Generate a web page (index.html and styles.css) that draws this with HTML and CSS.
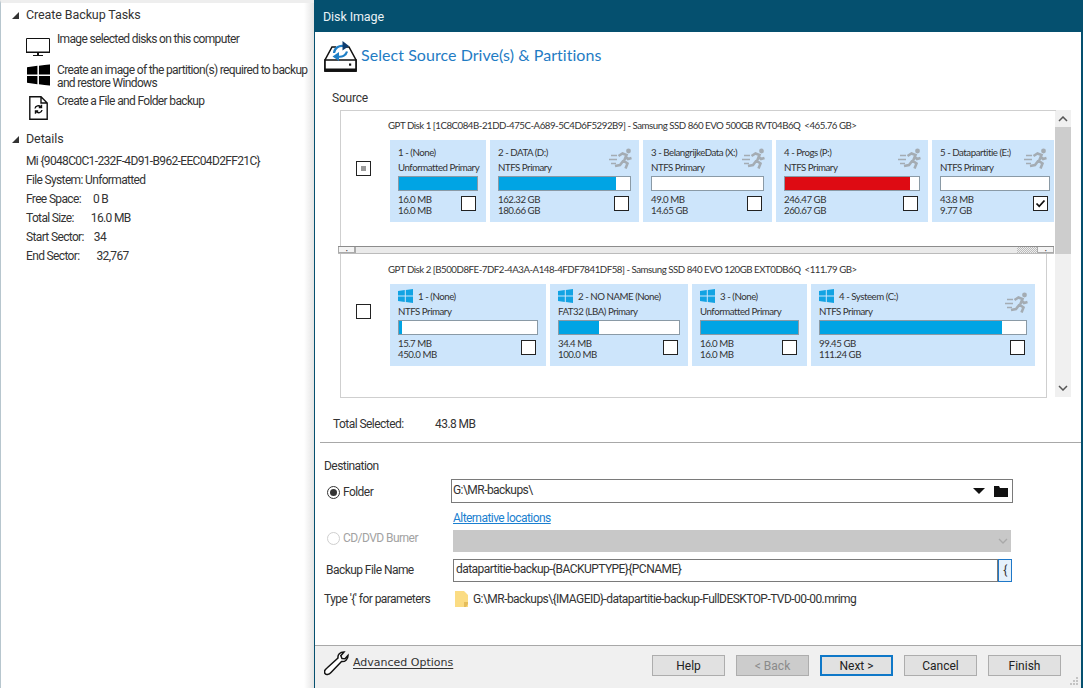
FILE: index.html
```html
<!DOCTYPE html>
<html lang="en">
<head>
<meta charset="utf-8">
<title>Disk Image</title>
<link rel="stylesheet" href="styles.css">
</head>
<body>
<svg class="defs" width="0" height="0" aria-hidden="true">
  <symbol id="run" viewBox="0 0 24 22">
    <circle cx="19.500" cy="3" r="2.400" fill="#a4acb3"/>
    <path d="M9.500 8 13.500 5.500 17.500 7 15 13 18.500 15.500 16.500 20.500M16 8 19 11 22.500 10M14.500 12.500 11 17 6 18" fill="none" stroke="#a4acb3" stroke-width="2.600"/>
    <path d="M2 7.500H8M0 11.500H8M2 15.500H7" fill="none" stroke="#a4acb3" stroke-width="1.300"/>
  </symbol>
  <symbol id="win" viewBox="0 0 15 14">
    <path d="M0 2 6.800 1V6.600H0ZM7.800 .9 15 0V6.600H7.800ZM0 7.600H6.800V13L0 12ZM7.800 7.600H15V14L7.800 13.100Z"/>
  </symbol>
</svg>

<aside class="side">
  <h2 class="side-head"><i class="tri"></i>Create Backup Tasks</h2>
  <div class="task task-a">
    <svg class="task-icon" width="24" height="18" viewBox="0 0 24 18"><path d="M.5.5H23.500V14.500H.5Z" fill="#fff" stroke="#111"/><path d="M0 13.500H24V15H0ZM11 15H13V17H11ZM7 17H17V18H7Z" fill="#111"/></svg>
    <span>Image selected disks on this computer</span>
  </div>
  <div class="task task-b">
    <svg class="task-icon" width="23" height="22" viewBox="0 0 15 14"><use href="#win"/></svg>
    <span>Create an image of the partition(s) required to backup and restore Windows</span>
  </div>
  <div class="task task-c">
    <svg class="task-icon" width="19" height="24" viewBox="0 0 19 24"><path d="M.8.8H12L18.200 7V23.200H.8Z M12 .8V7H18.200" fill="#fff" stroke="#111" stroke-width="1.400"/><path d="M6 12.500C6.500 9.500 10 9 12 11M12.500 8.800V11.500H9.800M13 14C12.500 17 9 17.500 7 15.500M6.500 17.700V15H9.200" fill="none" stroke="#111" stroke-width="1.400"/></svg>
    <span>Create a File and Folder backup</span>
  </div>
  <h2 class="side-head details-head"><i class="tri"></i>Details</h2>
  <ul class="details">
    <li>Mi {9048C0C1-232F-4D91-B962-EEC04D2FF21C}</li>
    <li>File System: Unformatted</li>
    <li><span class="k1">Free Space:</span>0 B</li>
    <li><span class="k2">Total Size:</span>16.0 MB</li>
    <li><span class="k3">Start Sector:</span>34</li>
    <li><span class="k4">End Sector:</span>32,767</li>
  </ul>
</aside>

<main class="dialog">
  <header class="titlebar">Disk Image</header>
  <div class="hero">
    <svg class="hero-icon" width="33" height="31" viewBox="0 0 33 31"><path d="M12 6H8L1 19V30H32V19L25 6H22" fill="none" stroke="#111" stroke-width="1.500"/><path d="M1 19H32V30H1Z" fill="#fff" stroke="#111" stroke-width="1.600"/><rect x="1" y="27.500" width="31" height="3" fill="#111"/><rect x="25" y="22.500" width="2.200" height="2.200" fill="#111"/><path d="M10 12C10.500 7 15 4 20 5" fill="none" stroke="#1f7fc6" stroke-width="2.200"/><path d="M18.500 0 25 5 18.500 9.500Z" fill="#0f3d70"/><path d="M23 10.500C22 14.500 18 16.500 13.500 15.500" fill="none" stroke="#1f7fc6" stroke-width="2.200"/><path d="M15 11 8.500 15.500 15 20Z" fill="#1f7fc6"/></svg>
    <h1>Select Source Drive(s) &amp; Partitions</h1>
  </div>
  <div class="source-label">Source</div>

  <section class="source">
    <div class="disks">
      <div class="disk disk-one">
        <span class="check disk-check"><i class="mixed"></i></span>
        <div class="disk-main">
          <div class="disk-title">GPT Disk 1 [1C8C084B-21DD-475C-A689-5C4D6F5292B9] - Samsung SSD 860 EVO 500GB RVT04B6Q&nbsp; &lt;465.76 GB&gt;</div>
          <div class="cards">
            <article class="card w96">
              <div class="name">1 - (None)</div><div class="type">Unformatted Primary</div>
              <div class="bar"><i style="width:100%"></i></div>
              <div class="foot"><div>16.0 MB<br>16.0 MB</div><span class="check"></span></div>
            </article>
            <article class="card w149">
              <svg class="run"><use href="#run"/></svg>
              <div class="name">2 - DATA (D:)</div><div class="type">NTFS Primary</div>
              <div class="bar"><i style="width:89%"></i></div>
              <div class="foot"><div>162.32 GB<br>180.66 GB</div><span class="check"></span></div>
            </article>
            <article class="card w129">
              <svg class="run"><use href="#run"/></svg>
              <div class="name">3 - BelangrijkeData (X:)</div><div class="type">NTFS Primary</div>
              <div class="bar"></div>
              <div class="foot"><div>49.0 MB<br>14.65 GB</div><span class="check"></span></div>
            </article>
            <article class="card w152">
              <svg class="run"><use href="#run"/></svg>
              <div class="name">4 - Progs (P:)</div><div class="type">NTFS Primary</div>
              <div class="bar red"><i style="width:93.500%"></i></div>
              <div class="foot"><div>246.47 GB<br>260.67 GB</div><span class="check"></span></div>
            </article>
            <article class="card w122">
              <svg class="run"><use href="#run"/></svg>
              <div class="name">5 - Datapartitie (E:)</div><div class="type">NTFS Primary</div>
              <div class="bar"></div>
              <div class="foot"><div>43.8 MB<br>9.77 GB</div><span class="check"><svg width="11" height="9" viewBox="0 0 11 9"><path d="M1.500 4.500 4.200 7.300 9.500 1.500" fill="none" stroke="#111" stroke-width="1.800"/></svg></span></div>
            </article>
          </div>
        </div>
      </div>
      <div class="hscroll"><span class="sb-btn">·</span><span class="sb-track"></span><span class="sb-grip"></span><span class="sb-btn">·</span></div>
      <div class="disk disk-two">
        <span class="check disk-check"></span>
        <div class="disk-main">
          <div class="disk-title">GPT Disk 2 [B500D8FE-7DF2-4A3A-A148-4FDF7841DF58] - Samsung SSD 840 EVO 120GB EXT0DB6Q&nbsp; &lt;111.79 GB&gt;</div>
          <div class="cards">
            <article class="card w156">
              <div class="name"><svg class="win"><use href="#win"/></svg>1 - (None)</div><div class="type">NTFS Primary</div>
              <div class="bar"><i style="width:2%"></i></div>
              <div class="foot"><div>15.7 MB<br>450.0 MB</div><span class="check"></span></div>
            </article>
            <article class="card w138">
              <div class="name"><svg class="win"><use href="#win"/></svg>2 - NO NAME (None)</div><div class="type">FAT32 (LBA) Primary</div>
              <div class="bar"><i style="width:33.500%"></i></div>
              <div class="foot"><div>34.4 MB<br>100.0 MB</div><span class="check"></span></div>
            </article>
            <article class="card w115">
              <div class="name"><svg class="win"><use href="#win"/></svg>3 - (None)</div><div class="type">Unformatted Primary</div>
              <div class="bar"><i style="width:100%"></i></div>
              <div class="foot"><div>16.0 MB<br>16.0 MB</div><span class="check"></span></div>
            </article>
            <article class="card w224">
              <svg class="run"><use href="#run"/></svg>
              <div class="name"><svg class="win"><use href="#win"/></svg>4 - Systeem (C:)</div><div class="type">NTFS Primary</div>
              <div class="bar"><i style="width:88.500%"></i></div>
              <div class="foot"><div>99.45 GB<br>111.24 GB</div><span class="check"></span></div>
            </article>
          </div>
        </div>
      </div>
    </div>
    <div class="vscroll">
      <svg width="10" height="6" viewBox="0 0 10 6"><path d="M1 5 5 1 9 5" fill="none" stroke="#555" stroke-width="1.500"/></svg>
      <div class="v-thumb"></div>
      <svg width="10" height="6" viewBox="0 0 10 6"><path d="M1 1 5 5 9 1" fill="none" stroke="#555" stroke-width="1.500"/></svg>
    </div>
  </section>

  <div class="total"><span>Total Selected:</span><span>43.8 MB</span></div>
  <hr class="rule">

  <div class="dest-label">Destination</div>
  <div class="row row-folder">
    <label class="radio-label"><i class="radio on"></i>Folder</label>
    <div class="field folder-field">
      <span>G:\MR-backups\</span>
      <span class="field-tools">
        <svg width="12" height="6" viewBox="0 0 12 6"><path d="M0 0H12L6 6Z" fill="#111"/></svg>
        <svg width="14" height="11" viewBox="0 0 14 11"><path d="M0 0H5L6 2H14V11H0Z" fill="#111"/></svg>
      </span>
    </div>
  </div>
  <a class="alt-link" href="#">Alternative locations</a>
  <div class="row row-cd">
    <label class="radio-label off"><i class="radio"></i>CD/DVD Burner</label>
    <div class="disabled-select"><svg width="10" height="6" viewBox="0 0 10 6"><path d="M1 1 5 5 9 1" fill="none" stroke="#a9a9a9" stroke-width="1.300"/></svg></div>
  </div>
  <div class="row row-name">
    <label class="name-label">Backup File Name</label>
    <div class="field name-field">datapartitie-backup-{BACKUPTYPE}{PCNAME}</div>
    <span class="brace">{</span>
  </div>
  <div class="row row-type">
    <span class="type-label">Type '{' for parameters</span>
    <svg class="file-icon" width="13" height="16" viewBox="0 0 13 16"><path d="M0 0H9L13 4V16H0Z" fill="#fbdc83"/><path d="M9 11H13V13L11 16H9Z" fill="#e5bd5b"/></svg>
    <span class="path">G:\MR-backups\{IMAGEID}-datapartitie-backup-FullDESKTOP-TVD-00-00.mrimg</span>
  </div>

  <footer class="footer">
    <svg class="wrench" width="25" height="25" viewBox="0 0 25 25"><path d="M24 4.500C24 8.500 21 11 17.500 10.500L7 21.500C5 23.800 1.500 24 1 22.500C-.2 20.500 1 18.500 3 17L14 7C13.500 3.500 16 1 20 1L16.800 4.700 18 7.500 21 7.800Z" fill="#fff" stroke="#111" stroke-width="1.500"/></svg>
    <a class="advanced" href="#">Advanced Options</a>
    <div class="buttons">
      <button class="btn">Help</button>
      <button class="btn" disabled>&lt; Back</button>
      <button class="btn primary">Next &gt;</button>
      <button class="btn">Cancel</button>
      <button class="btn">Finish</button>
    </div>
    <svg class="grip" width="9" height="9" viewBox="0 0 9 9"><path d="M7 1H9V3H7ZM4 4H6V6H4ZM7 4H9V6H7ZM1 7H3V9H1ZM4 7H6V9H4ZM7 7H9V9H7Z" fill="#c4c4c4"/></svg>
  </footer>
</main>
</body>
</html>
```
FILE: styles.css
```css
* { box-sizing: border-box; }
html, body { margin: 0; height: 100%; }
body {
  width: 1083px;
  height: 688px;
  overflow: hidden;
  display: flex;
  background: #fff;
  color: #333;
  font: 12px/16px Roboto, "Liberation Sans", sans-serif;
  letter-spacing: -0.55px;
}
.defs { position: absolute; }

/* left panel */
.side {
  width: 314px;
  flex: none;
  height: 688px;
  padding: 4px 0 0 25px;
  border-top: 3px solid #eee;
  border-left: 1px solid #b7c6ce;
  background: linear-gradient(90deg, #fff 96.800%, #e4e4e4 100%);
  letter-spacing: -0.65px;
}
.side-head {
  position: relative;
  margin: 0;
  font-weight: 400;
  font-size: 12.500px;
  line-height: 16px;
  letter-spacing: -0.1px;
}
.tri {
  position: absolute;
  left: -14px;
  top: 5px;
  width: 7px;
  height: 7px;
  background: #333;
  clip-path: polygon(100% 0, 100% 100%, 0 100%);
}
.task { position: relative; padding-left: 31px; width: 284px; }
.task-a { margin-top: 8px; height: 33px; }
.task-b { height: 29px; line-height: 13px; }
.task-c { height: 30px; }
.task-icon { position: absolute; left: 0; }
.task-a .task-icon { top: 7px; }
.task-b .task-icon { top: 0; left: 1px; }
.task-c .task-icon { top: 3px; left: 3px; }
.details-head { margin-top: 8px; }
.details { list-style: none; margin: 5px 0 0; padding: 0; }
.details li { height: 19px; line-height: 19px; }
.k1 { margin-right: 12px; }
.k2 { margin-right: 17px; }
.k3 { margin-right: 10px; }
.k4 { margin-right: 17px; }

/* dialog */
.dialog {
  width: 769px;
  height: 688px;
  flex: none;
  display: flex;
  flex-direction: column;
  border-left: 1px solid #05506f;
  border-right: 2px solid #05506f;
  background: #fff;
}
.titlebar {
  height: 32px;
  flex: none;
  background: #05506f;
  color: #eaf2f6;
  padding: 1px 8px 0;
  font-size: 12.500px;
  line-height: 32px;
  letter-spacing: -0.1px;
}
.hero {
  height: 49px;
  flex: none;
  display: flex;
  align-items: flex-start;
  gap: 4px;
  padding: 9px 0 0 9px;
}
.hero-icon { flex: none; }
.hero h1 {
  margin: 4px 0 0;
  font: 400 16px/20px Lato, sans-serif;
  letter-spacing: 0.05px;
  color: #1f7cc4;
}
.source-label { height: 29px; padding: 9px 0 0 17px; line-height: 16px; letter-spacing: -0.2px; }

.source { display: flex; height: 287px; flex: none; margin-left: 25px; }
.disks { position: relative; width: 715px; }
.disk {
  display: flex;
  border: 1px solid #cfcfcf;
  font-family: Lato, sans-serif;
  font-size: 9.700px;
  letter-spacing: -0.47px;
  color: #333;
}
.disk-one { height: 136px; width: 716px; border-bottom: 0; border-right: 0; }
.disk-two { height: 144px; width: 707px; border-top: 0; }
.disk .disk-check { margin: 50px 0 0 15px; }
.disk-two .disk-check { margin-top: 50px; }
.disk-main { margin-left: 19px; }
.disk-title { height: 29px; padding-top: 7px; line-height: 14px; white-space: nowrap; font-size: 9.700px; letter-spacing: -0.48px; margin-left: -2px; }
.disk-two .disk-title { padding-top: 8px; height: 30px; }
.cards { display: flex; gap: 4px; }
.card {
  position: relative;
  height: 82px;
  background: #cde5fb;
  padding: 4px 8px 0;
}
.w96 { width: 96px; }
.w149 { width: 149px; }
.w129 { width: 129px; }
.w152 { width: 152px; }
.w122 { width: 122px; padding-right: 4px; }
.w156 { width: 156px; }
.w138 { width: 138px; }
.w115 { width: 115px; }
.w224 { width: 224px; }
.name, .type { height: 16px; line-height: 16px; white-space: nowrap; display: flex; align-items: center; }
.type { line-height: 14px; align-items: flex-start; }
.bar {
  height: 15px;
  background: #fff;
  border: 1px solid #8a9aa6;
}
.bar i { display: block; height: 100%; background: #00a4e4; }
.bar.red i { background: #de0b13; }
.foot {
  display: flex;
  justify-content: space-between;
  align-items: flex-start;
  margin-top: 3px;
  line-height: 11px;
}
.check {
  width: 15px;
  height: 15px;
  flex: none;
  display: flex;
  align-items: center;
  justify-content: center;
  background: #fff;
  border: 1px solid #222;
}
.foot .check { margin: 2px 2px 0 0; }
.mixed { width: 5px; height: 5px; background: #9a9a9a; }
.run { position: absolute; right: 6px; top: 8px; width: 24px; height: 22px; }
.win { width: 15px; height: 14px; margin-right: 5px; fill: #12a3e3; flex: none; }
.hscroll {
  display: flex;
  position: relative;
  left: -2px;
  width: 716px;
  height: 8px;
  background: #eee;
  border-top: 1px solid #8c8c8c;
  border-bottom: 1px solid #bbb;
}
.sb-btn { width: 17px; background: #f4f4f4; border: 1px solid #aaa; border-top: 0; font: 8px/6px Lato, sans-serif; text-align: center; }
.sb-track { flex: 1; background: #eaeaea; border-left: 1px solid #aaa; }
.sb-grip {
  width: 20px;
  background: repeating-conic-gradient(#bbb 0 25%, #eee 0 50%) 0 0 / 2px 2px;
}
.vscroll {
  width: 16px;
  flex: none;
  display: flex;
  flex-direction: column;
  align-items: center;
  background: #f0f0f0;
  padding: 6px 0;
}
.v-thumb { width: 16px; height: 127px; background: #cdcdcd; margin: 5px 0 auto; }

.total { display: flex; padding: 19px 0 0 18px; height: 45px; line-height: 16px; }
.total span:first-child { width: 102px; }
.rule { height: 1px; margin: 0 0 0 5px; width: 761px; border: 0; background: #a8a8a8; flex: none; }

.dest-label { padding: 15px 0 0 9px; height: 36px; line-height: 16px; flex: none; }
.row { display: flex; align-items: center; flex: none; }
.radio-label { display: flex; align-items: center; width: 136px; padding: 2px 0 0 12px; }
.radio-label.off { color: #a2a2a2; width: 138px; padding: 0 0 6px 12px; }
.radio {
  width: 13px;
  height: 13px;
  border-radius: 50%;
  border: 1px solid #333;
  margin-right: 3px;
  display: flex;
  align-items: center;
  justify-content: center;
  background: #fff;
}
.radio.on::after { content: ""; width: 7px; height: 7px; border-radius: 50%; background: #333; }
.radio-label.off .radio { border-color: #cfcfcf; }
.field {
  border: 1px solid #7a7a7a;
  background: #fff;
  height: 24px;
  line-height: 21px;
  padding-left: 1px;
}
.row-folder { height: 24px; }
.folder-field { width: 562px; display: flex; justify-content: space-between; }
.field-tools { display: flex; align-items: center; gap: 9px; padding-right: 4px; }
.alt-link {
  display: block;
  margin: 8px 0 0 138px;
  height: 15px;
  line-height: 15px;
  color: #1a7fd0;
  text-decoration: underline;
  flex: none;
  align-self: flex-start;
}
.row-cd { height: 22px; margin-top: 4px; }
.disabled-select {
  width: 558px;
  height: 22px;
  background: #c8c8c8;
  display: flex;
  align-items: center;
  justify-content: flex-end;
  padding-right: 3px;
}
.row-name { height: 23px; margin-top: 7px; }
.name-label { width: 138px; padding: 0 0 2px 11px; }
.name-field { width: 545px; height: 23px; line-height: 19px; padding-left: 2px; }
.brace {
  width: 14px;
  height: 23px;
  border: 1px solid #1f78c8;
  background: #e5f1fb;
  text-align: center;
  line-height: 20px;
}
.row-type { height: 16px; margin-top: 9px; }
.type-label { width: 140px; padding-left: 9px; }
.file-icon { flex: none; }
.path { margin-left: 5px; white-space: nowrap; }

.footer {
  position: relative;
  margin-top: 38px;
  height: 43px;
  flex: 1;
  display: flex;
  align-items: flex-start;
  background: #f0f0f0;
  border-top: 1px solid #a8a8a8;
}
.wrench { margin: 5px 0 0 9px; flex: none; }
.advanced {
  margin: 9px 0 0 4px;
  color: #333;
  text-decoration: underline;
  text-underline-offset: 2px;
  font-family: "DejaVu Sans", sans-serif;
  font-size: 11px;
  letter-spacing: 0;
  line-height: 15px;
}
.buttons { display: flex; gap: 11px; position: absolute; left: 337px; top: 9px; }
.btn {
  width: 73px;
  height: 21px;
  padding: 1px 0 0;
  background: #e1e1e1;
  border: 1px solid #adadad;
  font: inherit;
  color: #222;
}
.btn:disabled { background: #ccc; color: #8a8a8a; }
.btn.primary { border: 2px solid #0f78c8; }
.grip { position: absolute; right: 3px; bottom: 3px; }
```
